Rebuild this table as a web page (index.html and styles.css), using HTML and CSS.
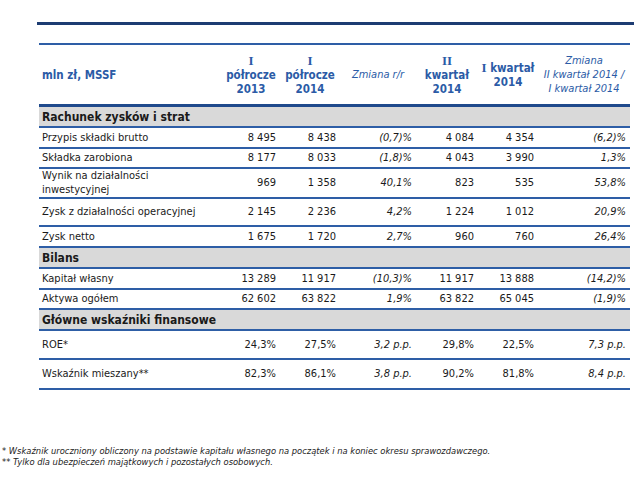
FILE: index.html
```html
<!DOCTYPE html>
<html lang="pl">
<head>
<meta charset="utf-8">
<link rel="stylesheet" href="styles.css">
</head>
<body>
<div class="page">
  <div class="topbar"></div>
  <table class="fin">
    <colgroup>
      <col class="c-label"><col class="c1"><col class="c2"><col class="c3"><col class="c4"><col class="c5"><col class="c6">
    </colgroup>
    <thead>
      <tr class="head">
        <th class="lbl">mln zł, MSSF</th>
        <th><span class="rn">I</span><br>półrocze<br>2013</th>
        <th><span class="rn">I</span><br>półrocze<br>2014</th>
        <th class="it">Zmiana r/r</th>
        <th><span class="rn">II</span><br>kwartał<br>2014</th>
        <th><span class="rn">I</span> kwartał<br>2014</th>
        <th class="it">Zmiana<br>II kwartał 2014 /<br>I kwartał 2014</th>
      </tr>
    </thead>
    <tbody>
      <tr class="sec"><td colspan="7">Rachunek zysków i strat</td></tr>
      <tr class="r21"><td>Przypis składki brutto</td><td>8 495</td><td>8 438</td><td class="it">(0,7)%</td><td>4 084</td><td>4 354</td><td class="it">(6,2)%</td></tr>
      <tr class="r20"><td>Składka zarobiona</td><td>8 177</td><td>8 033</td><td class="it">(1,8)%</td><td>4 043</td><td>3 990</td><td class="it">1,3%</td></tr>
      <tr class="r30"><td>Wynik na działalności<br>inwestycyjnej</td><td>969</td><td>1 358</td><td class="it">40,1%</td><td>823</td><td>535</td><td class="it">53,8%</td></tr>
      <tr class="r28"><td>Zysk z działalności operacyjnej</td><td>2 145</td><td>2 236</td><td class="it">4,2%</td><td>1 224</td><td>1 012</td><td class="it">20,9%</td></tr>
      <tr class="r21"><td>Zysk netto</td><td>1 675</td><td>1 720</td><td class="it">2,7%</td><td>960</td><td>760</td><td class="it">26,4%</td></tr>
      <tr class="sec"><td colspan="7">Bilans</td></tr>
      <tr class="r21"><td>Kapitał własny</td><td>13 289</td><td>11 917</td><td class="it">(10,3)%</td><td>11 917</td><td>13 888</td><td class="it">(14,2)%</td></tr>
      <tr class="r20"><td>Aktywa ogółem</td><td>62 602</td><td>63 822</td><td class="it">1,9%</td><td>63 822</td><td>65 045</td><td class="it">(1,9)%</td></tr>
      <tr class="sec"><td colspan="7">Główne wskaźniki finansowe</td></tr>
      <tr class="r29"><td>ROE*</td><td>24,3%</td><td>27,5%</td><td class="it">3,2 p.p.</td><td>29,8%</td><td>22,5%</td><td class="it">7,3 p.p.</td></tr>
      <tr class="r30"><td>Wskaźnik mieszany**</td><td>82,3%</td><td>86,1%</td><td class="it">3,8 p.p.</td><td>90,2%</td><td>81,8%</td><td class="it">8,4 p.p.</td></tr>
    </tbody>
  </table>
  <div class="notes">
    <p>* Wskaźnik uroczniony obliczony na podstawie kapitału własnego na początek i na koniec okresu sprawozdawczego.</p>
    <p>** Tylko dla ubezpieczeń majątkowych i pozostałych osobowych.</p>
  </div>
</div>
</body>
</html>
```

FILE: styles.css
```css
html, body {
  margin: 0;
  padding: 0;
  background: #ffffff;
}
.page {
  width: 640px;
  height: 485px;
  box-sizing: border-box;
  padding-top: 22px;
  position: relative;
  font-family: "DejaVu Sans Condensed", "Liberation Sans", sans-serif;
  color: #1a1a1a;
}
.topbar {
  margin: 0 6px 0 37px;
  height: 3px;
  background: #1d3c72;
}
.fin {
  margin: 18px 0 0 39px;
  width: 591px;
  border-collapse: collapse;
  table-layout: fixed;
  border-top: 2px solid #2e5ea6;
  font-size: 11px;
}
.c-label { width: 183px; }
.c1 { width: 58px; }
.c2 { width: 60px; }
.c3 { width: 76px; }
.c4 { width: 62px; }
.c5 { width: 60px; }
.c6 { width: 92px; }

.head th {
  height: 59px;
  padding: 0;
  color: #2b5ba6;
  font-weight: bold;
  font-size: 11.5px;
  line-height: 14px;
  text-align: center;
  vertical-align: middle;
  border-bottom: 3px solid #1f4a8c;
}
.head th.lbl {
  text-align: left;
  padding-left: 3px;
}
.head th.it {
  font-weight: normal;
  font-style: italic;
  font-size: 11px;
}
.rn {
  font-family: "Liberation Serif", serif;
  font-size: 13px;
}
.fin td {
  padding: 0 4px 0 0;
  text-align: right;
  vertical-align: middle;
  border-bottom: 2px solid #2e5ea6;
  line-height: 14px;
  white-space: nowrap;
}
.fin td:first-child {
  text-align: left;
  padding-left: 3px;
  white-space: normal;
}
.fin td.it {
  font-style: italic;
}
.sec td {
  background: #d9d9d9;
  font-weight: bold;
  font-size: 12px;
  height: 19px;
}
.r20 td { height: 18px; }
.r21 td { height: 19px; }
.r28 td { height: 26px; }
.r29 td { height: 27px; }
.r30 td { height: 28px; }

.notes {
  position: absolute;
  left: 2px;
  top: 445px;
  font-size: 9.3px;
  font-style: italic;
  color: #222;
  line-height: 11px;
}
.notes p {
  margin: 0;
}
```
